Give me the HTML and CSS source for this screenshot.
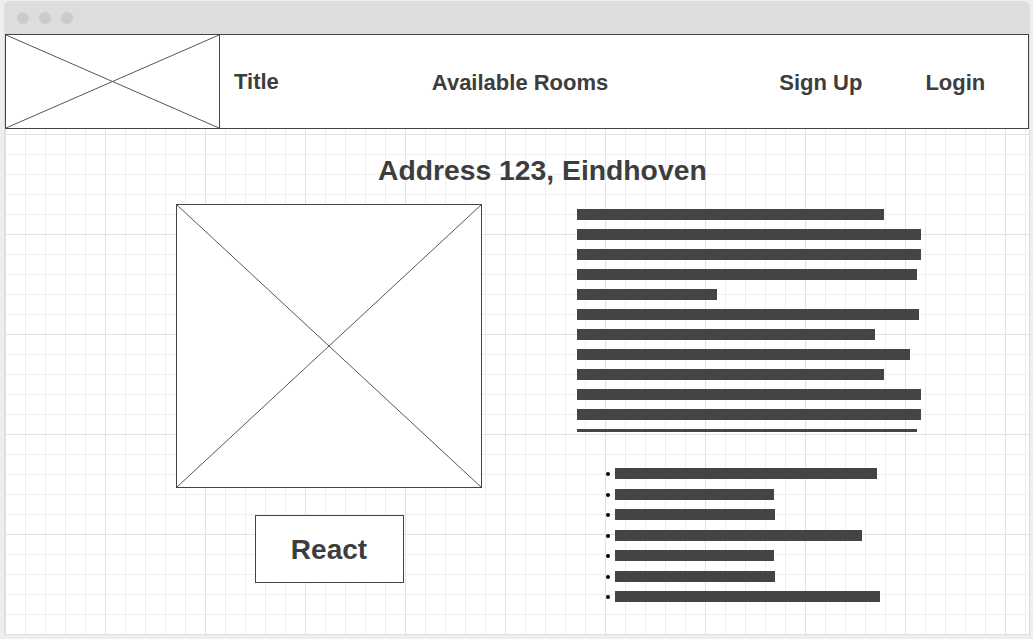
FILE: index.html
```html
<!DOCTYPE html>
<html lang="en">
<head>
<meta charset="utf-8">
<title>Address 123, Eindhoven</title>
<link rel="stylesheet" href="styles.css">
</head>
<body>
<div class="window">
  <div class="titlebar">
    <span class="dot"></span><span class="dot"></span><span class="dot"></span>
  </div>
  <div class="canvas">
    <header class="topbar">
      <div class="logo">
        <svg class="cross" viewBox="0 0 100 100" preserveAspectRatio="none">
          <line x1="0" y1="0" x2="100" y2="100" vector-effect="non-scaling-stroke"/>
          <line x1="100" y1="0" x2="0" y2="100" vector-effect="non-scaling-stroke"/>
        </svg>
      </div>
      <span class="nav nav-title">Title</span>
      <span class="nav nav-rooms">Available Rooms</span>
      <span class="nav nav-signup">Sign Up</span>
      <span class="nav nav-login">Login</span>
    </header>

    <h1 class="address">Address 123, Eindhoven</h1>

    <div class="main">
      <div class="left">
        <div class="photo">
          <svg class="cross" viewBox="0 0 100 100" preserveAspectRatio="none">
            <line x1="0" y1="0" x2="100" y2="100" vector-effect="non-scaling-stroke"/>
            <line x1="100" y1="0" x2="0" y2="100" vector-effect="non-scaling-stroke"/>
          </svg>
        </div>
        <button class="react">React</button>
      </div>

      <div class="right">
        <div class="para">
          <div class="bar" style="width:307px"></div>
          <div class="bar" style="width:344px"></div>
          <div class="bar" style="width:344px"></div>
          <div class="bar" style="width:340px"></div>
          <div class="bar" style="width:140px"></div>
          <div class="bar" style="width:342px"></div>
          <div class="bar" style="width:298px"></div>
          <div class="bar" style="width:333px"></div>
          <div class="bar" style="width:307px"></div>
          <div class="bar" style="width:344px"></div>
          <div class="bar" style="width:344px"></div>
          <div class="rule" style="width:340px"></div>
        </div>
        <ul class="list">
          <li><span class="bar" style="width:262px"></span></li>
          <li><span class="bar" style="width:159px"></span></li>
          <li><span class="bar" style="width:160px"></span></li>
          <li><span class="bar" style="width:247px"></span></li>
          <li><span class="bar" style="width:159px"></span></li>
          <li><span class="bar" style="width:160px"></span></li>
          <li><span class="bar" style="width:265px"></span></li>
        </ul>
      </div>
    </div>
  </div>
</div>
</body>
</html>
```

FILE: styles.css
```css
* { box-sizing: border-box; }

html, body {
  margin: 0;
  padding: 0;
  background: #eeeeee;
  font-family: "Liberation Sans", Arial, sans-serif;
  color: #3d3d3d;
}

body {
  padding: 1px 4px 4px 4px;
}

.window {
  width: 1026px;
  height: 634px;
  background: #dddddd;
  border-radius: 6px 6px 0 0;
  display: flex;
  flex-direction: column;
}

.titlebar {
  height: 33px;
  flex: none;
  display: flex;
  align-items: center;
  gap: 10px;
  padding: 0 0 0 13px;
}

.dot {
  width: 12px;
  height: 12px;
  border-radius: 50%;
  background: #cbcbcb;
}

.canvas {
  flex: 1;
  margin: 0 1px 1px 1px;
  background-color: #ffffff;
  background-image:
    linear-gradient(to right, #e2e2e2 1px, transparent 1px),
    linear-gradient(to bottom, #e2e2e2 1px, transparent 1px),
    linear-gradient(to right, #efefef 1px, transparent 1px),
    linear-gradient(to bottom, #efefef 1px, transparent 1px);
  background-size: 100px 100px, 100px 100px, 20px 20px, 20px 20px;
  overflow: hidden;
}

.topbar {
  height: 95px;
  border: 1px solid #444444;
  background: #ffffff;
  display: flex;
  align-items: center;
}

.logo {
  align-self: stretch;
  width: 214px;
  border-right: 1px solid #444444;
  position: relative;
}

.cross {
  display: block;
  width: 100%;
  height: 100%;
}

.cross line {
  stroke: #555555;
  stroke-width: 1;
}

.nav {
  font-size: 22px;
  font-weight: bold;
  line-height: 26px;
  padding-top: 2px;
  white-space: nowrap;
}

.nav-title { margin-left: 14px; padding-top: 0; }
.nav-rooms { margin-left: 153px; }
.nav-signup { margin-left: 171px; }
.nav-login { margin-left: 63px; }

.address {
  margin: 25px 0 0 373px;
  font-size: 28.3px;
  line-height: 32px;
  height: 32px;
  font-weight: bold;
  white-space: nowrap;
}

.main {
  display: flex;
  margin-top: 18px;
  padding-left: 171px;
}

.left {
  width: 306px;
  display: flex;
  flex-direction: column;
  align-items: center;
}

.photo {
  width: 306px;
  height: 284px;
  border: 1px solid #444444;
  background: #ffffff;
}

.react {
  margin-top: 27px;
  width: 149px;
  height: 68px;
  border: 1px solid #444444;
  background: #ffffff;
  font-family: "Liberation Sans", Arial, sans-serif;
  font-size: 28px;
  font-weight: bold;
  color: #3d3d3d;
  padding: 1px 0 0 0;
}

.right {
  margin-left: 95px;
  padding-top: 5px;
}

.para {
  display: flex;
  flex-direction: column;
  gap: 9px;
}

.bar {
  display: block;
  height: 11px;
  background: #444444;
}

.rule {
  height: 3px;
  background: #444444;
}

.list {
  list-style: none;
  margin: 36px 0 0 0;
  padding: 0 0 0 29px;
  display: flex;
  flex-direction: column;
  gap: 9px;
}

.list li {
  display: flex;
  align-items: center;
  height: 11px;
}

.list li:nth-child(even) {
  margin-top: 1px;
}

.list li::before {
  content: "";
  width: 4px;
  height: 4px;
  border-radius: 50%;
  background: #000000;
  margin-right: 5px;
  flex: none;
}
```
